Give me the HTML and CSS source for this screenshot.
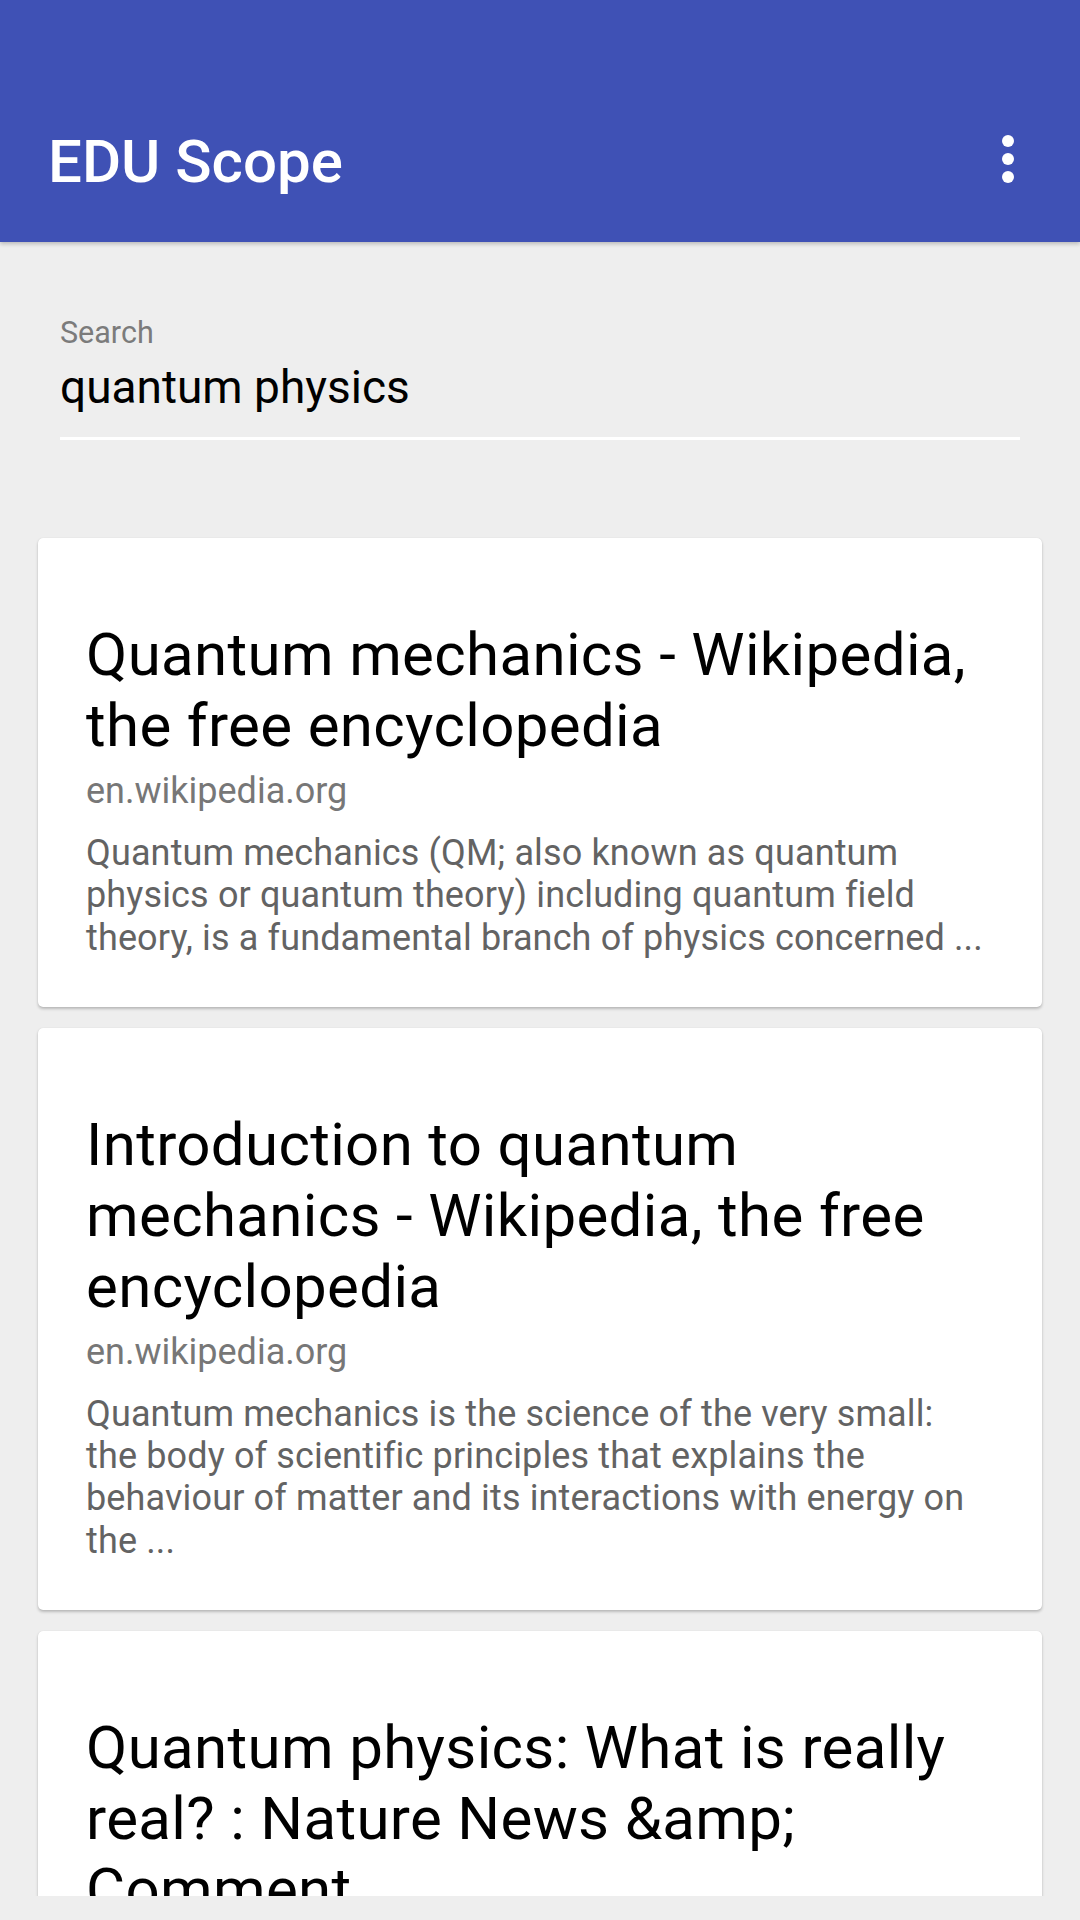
FILE: index.html
```html
<!DOCTYPE html>
<html lang="en">
<head>
<meta charset="utf-8">
<title>EDU Scope</title>
<link rel="stylesheet" href="styles.css">
</head>
<body>
<div class="screen">
  <header class="appbar">
    <h1 class="app-title">EDU Scope</h1>
    <button class="overflow" aria-label="More options">
      <svg viewBox="0 0 24 24" width="72" height="72" aria-hidden="true">
        <circle cx="12" cy="6" r="2" fill="#fff"/>
        <circle cx="12" cy="12" r="2" fill="#fff"/>
        <circle cx="12" cy="18" r="2" fill="#fff"/>
      </svg>
    </button>
  </header>
  <main class="content">
    <div class="search">
      <div class="search-label">Search</div>
      <div class="search-input">quantum physics</div>
      <div class="search-line"></div>
    </div>
    <div class="results">
      <article class="card">
        <h2 class="card-title">Quantum mechanics - Wikipedia, the free encyclopedia</h2>
        <div class="card-url">en.wikipedia.org</div>
        <p class="card-snippet">Quantum mechanics (QM; also known as quantum physics or quantum theory) including quantum field theory, is a fundamental branch of physics concerned ...</p>
      </article>
      <article class="card">
        <h2 class="card-title">Introduction to quantum mechanics - Wikipedia, the free encyclopedia</h2>
        <div class="card-url">en.wikipedia.org</div>
        <p class="card-snippet">Quantum mechanics is the science of the very small: the body of scientific principles that explains the behaviour of matter and its interactions with energy on the ...</p>
      </article>
      <article class="card">
        <h2 class="card-title">Quantum physics: What is really real? : Nature News &amp;amp; Comment</h2>
        <div class="card-url">www.nature.com</div>
        <p class="card-snippet">A wave of experiments is probing the root of quantum weirdness.</p>
      </article>
    </div>
  </main>
</div>
</body>
</html>
```

FILE: styles.css
```css
html, body {
  margin: 0;
  padding: 0;
  background: #eeeeee;
}

body {
  font-family: Roboto, "Noto Sans", "Liberation Sans", sans-serif;
  color: #000;
}

.screen {
  width: 1080px;
  height: 1920px;
  overflow: hidden;
  display: flex;
  flex-direction: column;
}

.appbar {
  flex: 0 0 auto;
  height: 242px;
  box-sizing: border-box;
  padding: 81px 36px 0 48px;
  background: #3f51b5;
  display: flex;
  align-items: center;
  justify-content: space-between;
  box-shadow: 0 2px 4px rgba(0, 0, 0, 0.22);
  position: relative;
  z-index: 1;
}

.app-title {
  margin: 0;
  font-size: 60px;
  font-weight: 500;
  line-height: 70px;
  color: #ffffff;
}

.overflow {
  width: 72px;
  height: 72px;
  padding: 0;
  margin: 0 0 5px 0;
  border: 0;
  background: transparent;
  display: flex;
}

.content {
  height: 1654px;
  overflow: hidden;
}

.search {
  margin: 0 60px;
  padding-top: 73px;
}

.search-label {
  font-size: 30.5px;
  line-height: 36px;
  color: #7b7b7b;
}

.search-input {
  margin-top: 8px;
  font-size: 46px;
  line-height: 56px;
  color: #000;
}

.search-line {
  margin-top: 22px;
  height: 3px;
  background: #ffffff;
}

.results {
  margin-top: 98px;
  display: flex;
  flex-direction: column;
  gap: 21px;
}

.card {
  margin: 0 38px;
  background: #ffffff;
  border-radius: 5px;
  padding: 81px 52px 48px 48px;
  box-shadow: 0 2px 3px rgba(0, 0, 0, 0.22), 0 0 1px rgba(0, 0, 0, 0.14);
}

.card-title {
  margin: 0;
  font-size: 60px;
  font-weight: 400;
  line-height: 71px;
  letter-spacing: 0.35px;
  color: #000;
}

.card-url {
  margin-top: 9px;
  font-size: 36px;
  line-height: 42.2px;
  color: #777777;
}

.card-snippet {
  margin: 20px 0 0 0;
  font-size: 36px;
  line-height: 42.2px;
  letter-spacing: 0.14px;
  color: #636363;
}
```
